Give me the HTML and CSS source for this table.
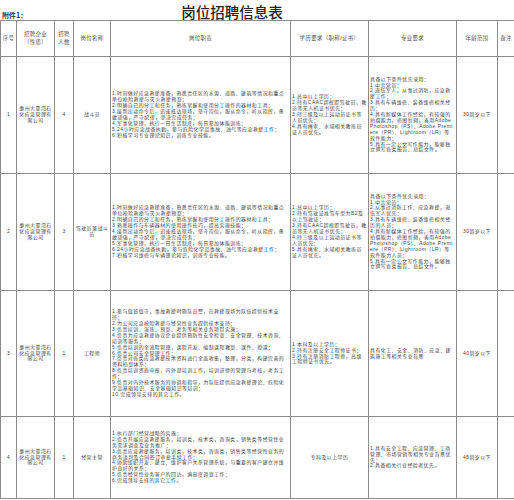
FILE: index.html
```html
<!DOCTYPE html>
<html lang="zh">
<head>
<meta charset="utf-8">
<link rel="stylesheet" href="styles.css">
</head>
<body>
<div class="page">
  <div class="top">
    <span class="annex">附件1：</span>
    <h1 class="title">岗位招聘信息表</h1>
  </div>
  <table class="grid">
    <colgroup>
      <col class="c-no"><col class="c-co"><col class="c-num"><col class="c-pos"><col class="c-duty"><col class="c-edu"><col class="c-major"><col class="c-age"><col class="c-note">
    </colgroup>
    <thead>
      <tr class="head">
        <th>序号</th><th>招聘企业<br>（性质）</th><th>招聘<br>人数</th><th>岗位名称</th><th>岗位职责</th><th>学历要求（职称/证书）</th><th>专业要求</th><th>年龄范围</th><th>备注</th>
      </tr>
    </thead>
    <tbody>
      <tr class="r1">
        <td class="ctr">1</td>
        <td class="ctr co">惠州大亚湾石化应急管理有限公司</td>
        <td class="ctr">4</td>
        <td class="ctr pos">战斗员</td>
        <td class="txt">1.时刻做好应急救援准备，熟悉责任区的水源、道路、建筑等情况和重点单位抢险救援与灭火救援预案；<br>2.明确自己的分工和任务，熟练掌握和使用分工操作的器材和工具；<br>3.接到出动命令后，迅速抵达现场，坚守岗位，服从命令，听从指挥，勇敢顽强，严守纪律，坚决完成任务；<br>4.军事化管理，执行一日生活制度，每日参加体能训练；<br>5.24小时应急战备执勤，参与危险化学品事故、油气等应急救援工作；<br>6.积极学习专业理论知识，训练专业技能。</td>
        <td class="txt">1.高中以上学历；<br>2.持有CAAC超视距驾驶员，教员等无人机证书优先；<br>3.持三级及以上运动员证书等人员优先；<br>4.具有绳索、水域相关教练员证人员优先。</td>
        <td class="txt">具备以下条件优先录用：<br>1.中共党员；<br>2.退伍军人，从事过消防，应急救援工作；<br>3.具有车辆维修、装备维修相关经历；<br>4.具有新媒体工作经验，有较强的拍摄能力，修图剪辑，善用Adobe Photoshop（PS）、Adobe Premiere（PR）、Lightroom（LR）等软件能力；<br>5.具有一定公文写作能力，能够独立撰写各类报告、总结文件。</td>
        <td class="ctr">30周岁以下</td>
        <td></td>
      </tr>
      <tr class="r2">
        <td class="ctr">2</td>
        <td class="ctr co">惠州大亚湾石化应急管理有限公司</td>
        <td class="ctr">3</td>
        <td class="ctr pos">驾驶员兼战斗员</td>
        <td class="txt">1.时刻做好应急救援准备，熟悉责任区的水源、道路、建筑等情况和重点单位抢险救援与灭火救援预案；<br>2.明确自己的分工和任务，熟练掌握和使用分工操作的器材和工具；<br>3.熟悉操作与车辆器材的使用操作技巧，提高实操技能；<br>4.接到出动命令后，迅速抵达现场，坚守岗位，服从命令，听从指挥，勇敢顽强，严守纪律，坚决完成任务；<br>5.军事化管理，执行一日生活制度，每日参加体能训练；<br>6.24小时应急战备执勤，参与危险化学品事故、油气等应急救援工作；<br>7.积极学习维修与车辆理论知识，训练专业技能。</td>
        <td class="txt">1.高中以上学历；<br>2.持有驾驶证准驾车型为B2及以上驾驶证；<br>3.持有CAAC超视距驾驶员，教员等无人机证书优先；<br>4.持三级及以上运动员证书等人员优先；<br>5.具有绳索、水域相关教练员证人员优先。</td>
        <td class="txt">具备以下条件优先录用：<br>1.中共党员；<br>2.从事过消防工作、应急救援，退伍军人优先；<br>3.具有车辆维修、装备维修相关经历的人员；<br>4.具有新媒体工作经验，有较强的拍摄能力，修图剪辑，善用Adobe Photoshop（PS）、Adobe Premiere（PR）、Lightroom（LR）等软件能力人员；<br>5.具有一定公文写作能力，能够独立撰写各类报告、总结文件。</td>
        <td class="ctr">30周岁以下</td>
        <td></td>
      </tr>
      <tr class="r3">
        <td class="ctr">3</td>
        <td class="ctr co">惠州大亚湾石化应急管理有限公司</td>
        <td class="ctr">1</td>
        <td class="ctr pos">工程师</td>
        <td class="txt loose">1.参与值班值守，事故救援时随队出警，在救援现场为队伍提供技术支持；<br>2.为公司应急抢险救援与经营性业务提供技术支持；<br>3.负责培训、演练、预案、考务等相关业务项目实施；<br>4.负责为应急救援协议企业提供预防性安全检查、安全管理、技术咨询、培训等服务；<br>5.负责培训的全流程管理，课程开发、编制课程教案、课件、授课；<br>6.负责公司安全管理工作；<br>7.负责对各类应急救援技术资料进行全面收集，整理，分类，构建完善的资料档案体系；<br>8.负责培训资质申报，内外部培训工作，培训讲师的管理与考核，考务工作；<br>9.负责对内外技术服务的协调和指导，为队伍提供应急救援理论、危险化学品基础知识、安全基础知识等培训；<br>10.完成领导安排的其它工作。</td>
        <td class="txt">1.本科及以上学历；<br>2.持有注册安全工程师证书；<br>3.持有注册消防工程师，高级工程师证书优先。</td>
        <td class="txt">具有化工、安全、消防、应急、建筑施工等相关专业背景</td>
        <td class="ctr">40周岁以下</td>
        <td></td>
      </tr>
      <tr class="r4">
        <td class="ctr">4</td>
        <td class="ctr co">惠州大亚湾石化应急管理有限公司</td>
        <td class="ctr">1</td>
        <td class="ctr pos">经营主管</td>
        <td class="txt">1.执行部门经营战略的实施；<br>2.负责开展应急救援服务，培训类，技术类，咨询类，销售类等经营性业务需求调查及业务推广；<br>3.负责应急救援服务，培训类，技术类，咨询类，销售类等经营性业务的商务谈判及合同签订审批手续工作；<br>4.协助组织开发、建立、维护客户关系管理系统，与重要的客户建立并维护良好的关系；<br>5.负责经营性业务客户的回访，满意度调查工作；<br>6.完成领导安排的其它工作。</td>
        <td class="ctr">专科及以上学历</td>
        <td class="txt">1.具有安全工程、应急管理、工商管理、市场营销等相关专业背景优先；<br>2.具备相关行业经验者优先。</td>
        <td class="ctr">45周岁以下</td>
        <td></td>
      </tr>
    </tbody>
  </table>
</div>
</body>
</html>
```

FILE: styles.css
```css
html, body {
  margin: 0;
  padding: 0;
  background: #ffffff;
}
body {
  font-family: "Liberation Sans", "Noto Sans CJK SC", sans-serif;
  color: #444444;
}
.page {
  width: 514px;
}
.top {
  height: 20px;
  display: flex;
  align-items: center;
}
.annex {
  font-family: "Noto Sans CJK SC", sans-serif;
  font-size: 7px;
  line-height: 8px;
  font-weight: 700;
  padding-left: 2px;
  padding-top: 9px;
  color: #333;
}
.title {
  margin: 0 0 0 154px;
  font-family: "Noto Sans CJK SC", sans-serif;
  font-size: 14.5px;
  font-weight: 500;
  line-height: 20px;
  color: #222;
  padding-top: 3px;
}
.grid {
  width: 514px;
  border-collapse: collapse;
  table-layout: fixed;
}
.c-no { width: 16px; }
.c-co { width: 38px; }
.c-num { width: 19px; }
.c-pos { width: 37px; }
.c-duty { width: 180px; }
.c-edu { width: 78px; }
.c-major { width: 88px; }
.c-age { width: 41px; }
.c-note { width: 17px; }
.grid th, .grid td {
  border: 1px solid #8c8c8c;
  padding: 0 1px;
  font-size: 4.9px;
  letter-spacing: 0.5px;
  line-height: 5.9px;
  vertical-align: middle;
  overflow: hidden;
  word-break: break-all;
}
.grid th {
  font-weight: 400;
  text-align: center;
  color: #555;
  font-size: 5.4px;
  letter-spacing: 0.4px;
  line-height: 7.5px;
}
.head th { height: 35px; }
.r1 td { height: 116px; }
.r2 td { height: 116px; }
.r3 td { height: 125px; }
.r4 td { height: 81px; }
.ctr { text-align: center; }
.co, .pos {
  font-size: 5.4px;
  letter-spacing: 0.5px;
  line-height: 8.2px;
}
.txt { text-align: left; }
.loose { line-height: 6.4px; }
```
